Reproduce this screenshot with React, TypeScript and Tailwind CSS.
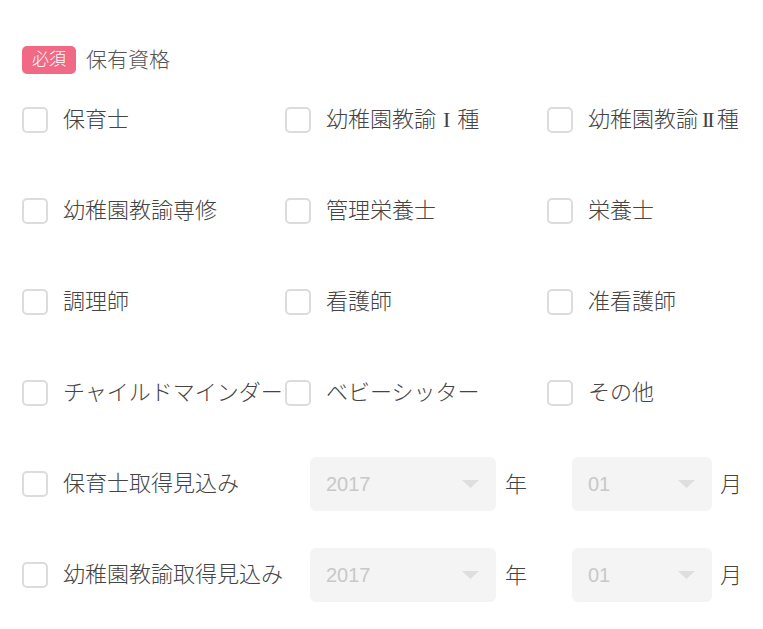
const JP = "font-['Liberation_Sans','Noto_Sans_CJK_JP',sans-serif]";

type Item = { label: React.ReactNode; key: string };

const Roman = ({ n, cls }: { n: string; cls: string }) => (
  <span className={`font-['Liberation_Serif',serif] ${cls}`}>{n}</span>
);

const rows: Item[][] = [
  [
    { key: "a", label: "保育士" },
    { key: "b", label: <>幼稚園教諭<Roman n="I" cls="mx-[7px]" />種</> },
    { key: "c", label: <>幼稚園教諭<Roman n="II" cls="mx-[4px] tracking-[-2px]" />種</> },
  ],
  [
    { key: "d", label: "幼稚園教諭専修" },
    { key: "e", label: "管理栄養士" },
    { key: "f", label: "栄養士" },
  ],
  [
    { key: "g", label: "調理師" },
    { key: "h", label: "看護師" },
    { key: "i", label: "准看護師" },
  ],
  [
    { key: "j", label: "チャイルドマインダー" },
    { key: "k", label: "ベビーシッター" },
    { key: "l", label: "その他" },
  ],
];

function Box() {
  return (
    <span className="w-[26px] h-[26px] shrink-0 rounded-[5px] border-2 border-[#dcdcdc] bg-white" />
  );
}

function Check({ label }: { label: React.ReactNode }) {
  return (
    <label className="flex items-center gap-[15px] whitespace-nowrap">
      <Box />
      <span className="text-[22px] font-light text-[#444] leading-none">{label}</span>
    </label>
  );
}

function Select({ value, width }: { value: string; width: string }) {
  return (
    <div
      className={`${width} h-[54px] rounded-[6px] bg-[#f4f4f4] flex items-center justify-between pl-[16px] pr-[17px]`}
    >
      <span className="font-['Liberation_Sans',sans-serif] text-[20px] text-[#c8c8c8]">
        {value}
      </span>
      <svg width="17" height="8" viewBox="0 0 17 8">
        <polygon points="0,0 17,0 8.5,8" fill="#dedede" />
      </svg>
    </div>
  );
}

function DateRow({ label }: { label: string }) {
  return (
    <div className="flex items-center h-[54px]">
      <div className="w-[288px]">
        <Check label={label} />
      </div>
      <Select value="2017" width="w-[186px]" />
      <span className="ml-[9px] w-[67px] text-[22px] font-light text-[#444]">年</span>
      <Select value="01" width="w-[140px]" />
      <span className="ml-[8px] text-[22px] font-light text-[#444]">月</span>
    </div>
  );
}

export default function App() {
  return (
    <div className={`${JP} bg-white w-[763px] h-[629px] pl-[22px] pt-[46px] overflow-hidden`}>
      <div className="flex items-center gap-[10px] h-[28px]">
        <span className="h-[28px] w-[54px] rounded-[5px] bg-[#f06a85] text-white text-[17px] font-light flex items-center justify-center">
          必須
        </span>
        <span className="text-[21px] font-light text-[#555]">保有資格</span>
      </div>
      <div className="mt-[19px] flex flex-col gap-[37px]">
        {rows.map((r, i) => (
          <div key={i} className="grid grid-cols-[263px_262px_1fr] items-center h-[54px]">
            {r.map((it) => (
              <Check key={it.key} label={it.label} />
            ))}
          </div>
        ))}
        <DateRow label="保育士取得見込み" />
        <DateRow label="幼稚園教諭取得見込み" />
      </div>
    </div>
  );
}
